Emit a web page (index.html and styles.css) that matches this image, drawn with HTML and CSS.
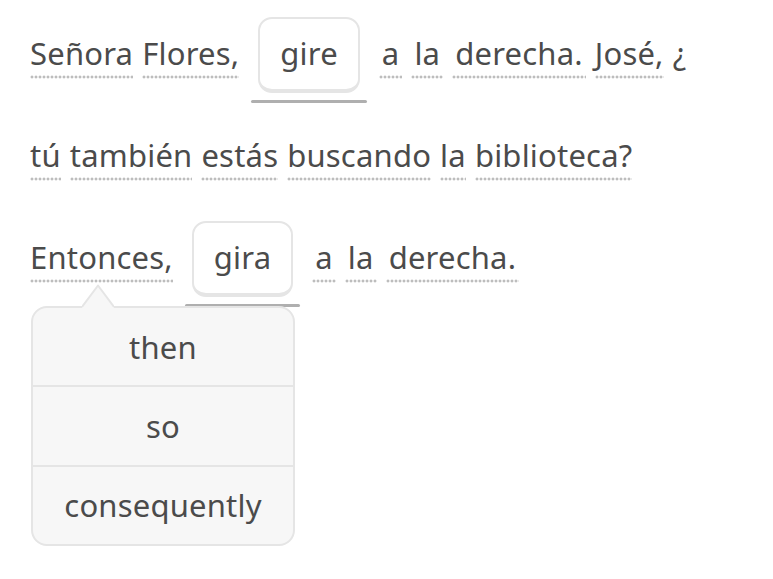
FILE: index.html
```html
<!DOCTYPE html>
<html lang="es">
<head>
<meta charset="utf-8">
<title>Passage</title>
<link rel="stylesheet" href="styles.css">
</head>
<body>
<div class="passage">
  <div class="row">
    <span class="tok">Señora</span>
    <span class="tok">Flores,</span>
    <span class="slot"><span class="chip">gire</span><span class="bar"></span></span>
    <span class="tok pad">a</span>
    <span class="tok pad">la</span>
    <span class="tok pad">derecha.</span>
    <span class="tok">José,</span>
    <span class="tok plain">¿</span>
  </div>
  <div class="row">
    <span class="tok">tú</span>
    <span class="tok">también</span>
    <span class="tok">estás</span>
    <span class="tok">buscando</span>
    <span class="tok">la</span>
    <span class="tok">biblioteca?</span>
  </div>
  <div class="row">
    <span class="tok">Entonces,</span>
    <span class="slot"><span class="chip">gira</span><span class="bar"></span></span>
    <span class="tok pad">a</span>
    <span class="tok pad">la</span>
    <span class="tok pad">derecha.</span>
  </div>

  <div class="popup">
    <svg class="arrow" width="32" height="26" viewBox="0 0 32 26">
      <polygon points="0,23 16,1.5 32,23 32,26 0,26" fill="#f7f7f7"/>
      <polyline points="0,23 16,1.5 32,23" fill="none" stroke="#e5e5e5" stroke-width="2" stroke-linejoin="round"/>
    </svg>
    <div class="opt">then</div>
    <div class="opt">so</div>
    <div class="opt">consequently</div>
  </div>
</div>
</body>
</html>
```

FILE: styles.css
```css
html, body {
  margin: 0;
  padding: 0;
  background: #ffffff;
}

body {
  font-family: "Noto Sans", "DejaVu Sans", sans-serif;
  color: #4b4b4b;
  min-height: 579px;
}

.passage {
  padding: 17px 0 0 30px;
  display: flex;
  flex-direction: column;
  gap: 16px;
}

.row {
  display: flex;
  align-items: baseline;
  gap: 9px;
  height: 86px;
}

.tok {
  display: block;
  font-size: 31px;
  letter-spacing: 0.2px;
  line-height: 40px;
  margin-top: 16px;
  padding-bottom: 6px;
  background-image: radial-gradient(circle at center, #bdbdbd 1.3px, transparent 1.7px);
  background-size: 4px 4px;
  background-repeat: repeat-x;
  background-position: left bottom;
}

.tok.pad {
  padding-left: 3px;
  padding-right: 3px;
}

.tok.plain {
  background-image: none;
}

.slot {
  display: flex;
  flex-direction: column;
  align-items: center;
  margin: 0 3px 0 3px;
}

.chip {
  display: block;
  margin: 0 7px;
  font-size: 31px;
  letter-spacing: 0.2px;
  line-height: 40px;
  padding: 14px 20px 16px;
  border: 2px solid #e5e5e5;
  border-bottom-width: 4px;
  border-radius: 14px;
  background: #ffffff;
}

.bar {
  display: block;
  align-self: stretch;
  height: 3px;
  margin-top: 7px;
  border-radius: 2px;
  background: #afafaf;
}

.popup {
  position: relative;
  align-self: flex-start;
  margin-top: -17px;
  margin-left: 1px;
  width: 260px;
  background: #f7f7f7;
  border: 2px solid #e5e5e5;
  border-radius: 16px;
  display: flex;
  flex-direction: column;
}

.arrow {
  position: absolute;
  left: 49px;
  top: -24px;
  display: block;
}

.opt {
  height: 77.33px;
  display: flex;
  align-items: center;
  justify-content: center;
  font-size: 31px;
  letter-spacing: 0.2px;
  line-height: 40px;
}

.opt + .opt {
  border-top: 2px solid #e5e5e5;
}
```
